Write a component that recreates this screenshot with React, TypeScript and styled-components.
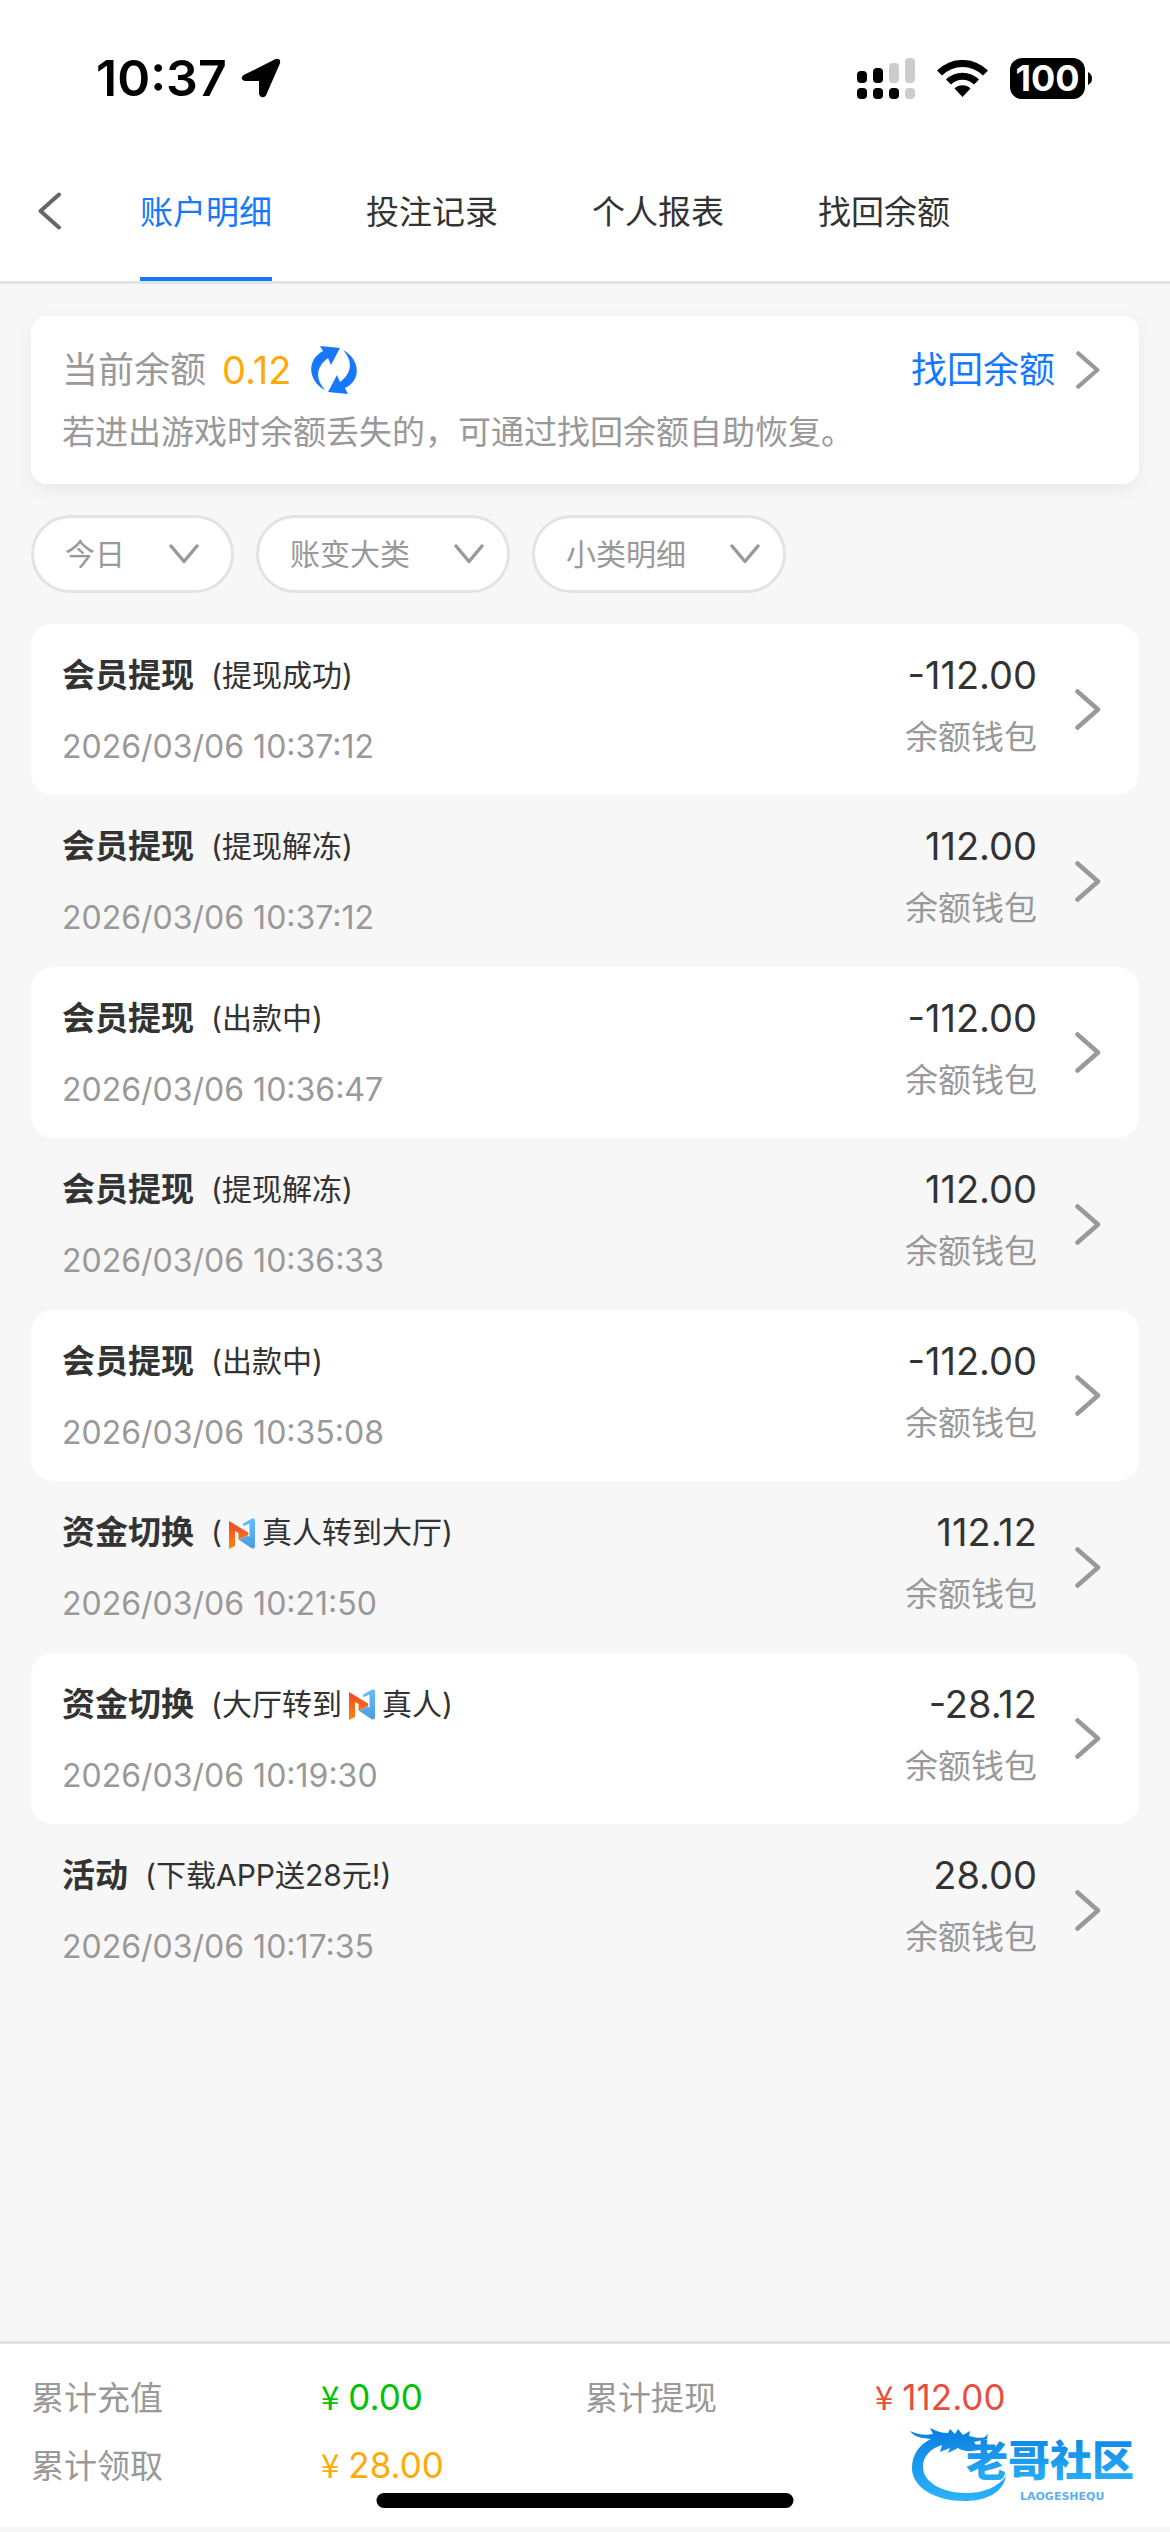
import React from "react";
import styled, { createGlobalStyle } from "styled-components";

const GlobalStyle = createGlobalStyle`
  *, *::before, *::after { box-sizing: border-box; }
  body {
    margin: 0;
    background: #f7f7f7;
    color: #333333;
    font-family: Inter, "Noto Sans CJK SC", sans-serif;
  }
  button, select { font: inherit; color: inherit; }
`;

const Page = styled.div`
  display: flex;
  flex-direction: column;
  min-height: 100vh;
`;

const StatusBar = styled.header`
  display: flex;
  align-items: center;
  justify-content: space-between;
  height: 156px;
  padding: 0 78px 0 96px;
  background: #ffffff;
  color: #000000;
`;

const StatusGroup = styled.div<{ $gap: number }>`
  display: flex;
  align-items: center;
  gap: ${(p) => p.$gap}px;
`;

const Clock = styled.time`
  font-size: 50px;
  font-weight: 600;
  line-height: 60px;
`;

const Battery = styled.div`
  display: flex;
  align-items: center;
  gap: 3px;
`;

const BatteryBody = styled.span`
  display: flex;
  align-items: center;
  justify-content: center;
  width: 75px;
  height: 41px;
  border-radius: 12px;
  background: #000000;
  color: #ffffff;
  font-size: 36px;
  font-weight: 700;
  line-height: 41px;
`;

const NavBar = styled.nav`
  display: flex;
  align-items: stretch;
  height: 128px;
  background: #ffffff;
  border-bottom: 3px solid #e3e3e3;
`;

const BackButton = styled.button`
  display: flex;
  align-items: center;
  width: 140px;
  padding: 0 0 16px 37px;
  border: 0;
  background: none;
  color: #666666;
`;

const Tabs = styled.div`
  display: flex;
  gap: 94px;
`;

const Tab = styled.button<{ $active?: boolean }>`
  padding: 6px 0 16px;
  border: 0;
  border-bottom: 4px solid ${(p) => (p.$active ? "#1677ff" : "transparent")};
  background: none;
  color: ${(p) => (p.$active ? "#1677ff" : "#333333")};
  font-size: 33px;
  line-height: 48px;
`;

const Content = styled.main`
  display: flex;
  flex: 1;
  flex-direction: column;
  padding: 32px 31px;
`;

const BalanceCard = styled.section`
  display: flex;
  flex-direction: column;
  gap: 12px;
  height: 168px;
  padding: 28px 38px 0 31px;
  border-radius: 16px;
  background: #ffffff;
  box-shadow: 0 6px 18px rgba(0, 0, 0, 0.06);
`;

const BalanceRow = styled.div`
  display: flex;
  align-items: center;
  height: 52px;
  color: #999999;
  font-size: 36px;
  line-height: 52px;
`;

const BalanceValue = styled.span`
  margin: 0 20px 0 16px;
  color: #ffaa09;
  font-size: 38px;
`;

const IconButton = styled.button`
  display: flex;
  padding: 0;
  border: 0;
  background: none;
  color: #1677ff;
`;

const RecoverLink = styled.a`
  display: flex;
  align-items: center;
  gap: 20px;
  margin-left: auto;
  color: #1677ff;
  text-decoration: none;
`;

const Hint = styled.p`
  margin: 0;
  color: #999999;
  font-size: 33px;
  line-height: 48px;
`;

const Filters = styled.div`
  display: flex;
  gap: 22px;
  margin: 31px 0;
`;

const FilterPill = styled.label`
  display: flex;
  align-items: center;
  gap: 44px;
  min-width: 203px;
  height: 78px;
  padding: 0 23px 0 31px;
  border: 3px solid #e3e3e3;
  border-radius: 39px;
  background: #ffffff;
  color: #999999;
`;

const FilterSelect = styled.select`
  appearance: none;
  padding: 0;
  border: 0;
  background: none;
  font-size: 30px;
  line-height: 44px;
`;

const RecordList = styled.ul`
  display: flex;
  flex-direction: column;
  margin: 0;
  padding: 0;
  list-style: none;
`;

const RecordItem = styled.li`
  display: flex;
  align-items: center;
  height: 171px;
  padding: 0 38px 0 31px;
  border-radius: 22px;

  &:nth-child(odd) { background: #ffffff; }
  &:nth-child(even) { height: 172px; }
`;

const RecordMain = styled.div`
  display: flex;
  flex: 1;
  flex-direction: column;
  gap: 26px;
`;

const RecordTitle = styled.div`
  display: flex;
  align-items: center;
  gap: 17px;
  font-size: 30px;
  line-height: 48px;
`;

const RecordKind = styled.strong`
  font-size: 33px;
  font-weight: 700;
`;

const RecordNote = styled.span`
  display: flex;
  align-items: center;
`;

const RecordTime = styled.time`
  color: #999999;
  font-size: 32px;
  line-height: 44px;
`;

const RecordSide = styled.div`
  display: flex;
  flex-direction: column;
  gap: 14px;
  margin-right: 38px;
  padding-bottom: 8px;
  text-align: right;
`;

const Amount = styled.span`
  font-size: 38px;
  line-height: 48px;
`;

const Wallet = styled.span`
  color: #999999;
  font-size: 33px;
  line-height: 48px;
`;

const BrandIcon = styled.svg`
  width: 26px;
  height: 31px;
  margin: 2px 7px 0;
`;

const Footer = styled.footer`
  position: sticky;
  bottom: 0;
  margin-bottom: 5px;
  padding: 30px 31px 37px;
  border-top: 3px solid #e3e3e3;
  background: #ffffff;
`;

const Totals = styled.dl`
  display: grid;
  grid-template-columns: 1fr 1fr;
  row-gap: 20px;
  margin: 0;
`;

const Total = styled.div`
  display: flex;
  font-size: 33px;
  line-height: 48px;
`;

const TotalLabel = styled.dt`
  width: 290px;
  color: #999999;
`;

const TotalValue = styled.dd<{ $color: string }>`
  display: flex;
  align-items: baseline;
  gap: 9px;
  height: 48px;
  margin: 0;
  color: ${(p) => p.$color};
  font-size: 35px;
  line-height: 44px;
`;

const Currency = styled.span`
  font-family: "Noto Sans CJK SC", sans-serif;
  font-size: 33px;
`;

const HomeIndicator = styled.div`
  position: absolute;
  bottom: 19px;
  left: 50%;
  width: 417px;
  height: 15px;
  border-radius: 8px;
  background: #000000;
  transform: translateX(-50%);
`;

const Watermark = styled.svg`
  position: absolute;
  right: 18px;
  bottom: 17px;
  width: 244px;
  height: 88px;
`;

const ChevronRight = ({ height = 41 }: { height?: number }) => (
  <svg width="26" height={height} viewBox="0 0 26 41" fill="none" stroke="#999999" strokeWidth="4.5" strokeLinecap="round" strokeLinejoin="round" aria-hidden="true">
    <path d="M2.5 2.5 23 20.5 2.5 38.5" />
  </svg>
);

const ChevronDown = () => (
  <svg width="30" height="20" viewBox="0 0 30 20" fill="none" stroke="#999999" strokeWidth="3.4" strokeLinecap="round" strokeLinejoin="round" aria-hidden="true">
    <path d="M2 2 15 17.5 28 2" />
  </svg>
);

const Brand = () => (
  <BrandIcon viewBox="0 0 26 31" aria-hidden="true">
    <defs>
      <linearGradient id="brandWarm" x1="0" y1="0" x2="0" y2="1">
        <stop offset="0" stopColor="#f0432f" />
        <stop offset="1" stopColor="#ff8a00" />
      </linearGradient>
      <linearGradient id="brandCool" x1="0" y1="0" x2="0" y2="1">
        <stop offset="0" stopColor="#62bdff" />
        <stop offset="1" stopColor="#4b9ddb" />
      </linearGradient>
    </defs>
    <path d="M13.5 6 23 .5Q26-.5 26 3V28Q26 31 23 30.500L9.500 21.500 19 17.500 20.500 19V5.500L15 8Z" fill="url(#brandCool)" />
    <path d="M0 3 19 14.500Q20 16 18.500 17.500L9.500 21.500V15L6 13V28L0 31Z" fill="url(#brandWarm)" />
  </BrandIcon>
);

const WatermarkLogo = () => (
  <Watermark viewBox="0 0 244 88" role="img" aria-label="老哥社区">
    <defs>
      <linearGradient id="waterBlue" x1="0" y1="0" x2="0" y2="1">
        <stop offset="0" stopColor="#0a7fe0" />
        <stop offset="1" stopColor="#2bb4fb" />
      </linearGradient>
    </defs>
    <path d="M23 17C10 23 4 34 4 46C4 66 28 79 56 79C78 79 95 71 98 54C90 65 76 71 58 71C34 71 15 60 15 45C15 34 22 27 34 23L32 30 42 26 40 31 50 26C56 30 63 30 76 27L77 23H68L66 20 79 17 80 12 77 15C71 17 66 15 61 14L62 9 55 13 50 7 47 12 42 7 40 11C34 11 28 9 22 6L25 12C17 14 9 12 2 9C7 16 15 16 23 17Z" fill="url(#waterBlue)" />
    <text x="58" y="54" fontSize="42" fontWeight="900" fontFamily="Noto Sans CJK SC, sans-serif" fill="url(#waterBlue)">老哥社区</text>
    <text x="112" y="78" fontSize="11" fontWeight="700" fontFamily="DejaVu Sans, sans-serif" fill="#5cb0f0">LAOGESHEQU</text>
  </Watermark>
);

type RecordEntry = { kind: string; note: React.ReactNode; time: string; amount: string };

const records: RecordEntry[] = [
  { kind: "会员提现", note: "(提现成功)", time: "2026/03/06 10:37:12", amount: "-112.00" },
  { kind: "会员提现", note: "(提现解冻)", time: "2026/03/06 10:37:12", amount: "112.00" },
  { kind: "会员提现", note: "(出款中)", time: "2026/03/06 10:36:47", amount: "-112.00" },
  { kind: "会员提现", note: "(提现解冻)", time: "2026/03/06 10:36:33", amount: "112.00" },
  { kind: "会员提现", note: "(出款中)", time: "2026/03/06 10:35:08", amount: "-112.00" },
  { kind: "资金切换", note: <>(<Brand />真人转到大厅)</>, time: "2026/03/06 10:21:50", amount: "112.12" },
  { kind: "资金切换", note: <>(大厅转到<Brand />真人)</>, time: "2026/03/06 10:19:30", amount: "-28.12" },
  { kind: "活动", note: "(下载APP送28元!)", time: "2026/03/06 10:17:35", amount: "28.00" },
];

const totals = [
  { label: "累计充值", value: "0.00", color: "#00c203" },
  { label: "累计提现", value: "112.00", color: "#ea4e3d" },
  { label: "累计领取", value: "28.00", color: "#ffaa09" },
];

const tabs = ["账户明细", "投注记录", "个人报表", "找回余额"];
const filters = ["今日", "账变大类", "小类明细"];

export default function App() {
  return (
    <Page>
      <GlobalStyle />
      <StatusBar>
        <StatusGroup $gap={14}>
          <Clock>10:37</Clock>
          <svg width="40" height="40" viewBox="0 0 40 40" aria-hidden="true">
            <path d="M3 18 35 2Q39 1 38 5L24 37Q21 40 19 36V22H4Q0 21 3 18Z" fill="#000" stroke="#000" strokeWidth="2" strokeLinejoin="round" />
          </svg>
        </StatusGroup>
        <StatusGroup $gap={22}>
          <svg width="58" height="41" viewBox="0 0 58 41" aria-label="信号" role="img">
            <rect x="0" y="13" width="10" height="12" rx="4" />
            <rect x="16" y="10" width="10" height="15" rx="4" />
            <rect x="32" y="5" width="10" height="20" rx="4" fill="#ccc" />
            <rect x="48" y="0" width="10" height="25" rx="4" fill="#ccc" />
            <rect x="0" y="30" width="10" height="11" rx="4" />
            <rect x="16" y="30" width="10" height="11" rx="4" />
            <rect x="32" y="30" width="10" height="11" rx="4" />
            <rect x="48" y="30" width="10" height="11" rx="4" fill="#ccc" />
          </svg>
          <svg width="51" height="37" viewBox="0 0 51 37" aria-label="Wi-Fi" role="img">
            <path d="M0 10.500A36 36 0 0 1 51 10.500L46 15.500A29 29 0 0 0 5 15.500Z" />
            <path d="M9 19.500A23.500 23.500 0 0 1 42 19.500L37 24.500A16.500 16.500 0 0 0 14 24.500Z" />
            <path d="M17.500 28.500A11.500 11.500 0 0 1 33.500 28.500L25.500 37Z" />
          </svg>
          <Battery>
            <BatteryBody>100</BatteryBody>
            <svg width="4" height="13" viewBox="0 0 4 13" aria-hidden="true">
              <path d="M0 0Q4 2 4 6.500Q4 11 0 13Z" />
            </svg>
          </Battery>
        </StatusGroup>
      </StatusBar>
      <NavBar>
        <BackButton aria-label="返回">
          <svg width="25" height="38" viewBox="0 0 25 38" fill="none" stroke="currentColor" strokeWidth="4" strokeLinecap="round" strokeLinejoin="round" aria-hidden="true">
            <path d="M22 2.500 3.500 19 22 35.500" />
          </svg>
        </BackButton>
        <Tabs>
          {tabs.map((tab, i) => (
            <Tab key={tab} $active={i === 0}>{tab}</Tab>
          ))}
        </Tabs>
      </NavBar>
      <Content>
        <BalanceCard>
          <BalanceRow>
            当前余额
            <BalanceValue>0.12</BalanceValue>
            <IconButton aria-label="刷新余额">
              <svg width="46" height="48" viewBox="0 0 46 48" fill="currentColor" aria-hidden="true">
                <path d="M9 0 29 2 20 19 17 12C6 20 3 32 14 44C-3 35-5 14 12 5Z" />
                <path d="M37 48 17 46 26 29 29 36C40 28 43 16 32 4C49 13 51 34 34 42Z" />
              </svg>
            </IconButton>
            <RecoverLink href="#recover">
              找回余额
              <ChevronRight height={38} />
            </RecoverLink>
          </BalanceRow>
          <Hint>若进出游戏时余额丢失的，可通过找回余额自助恢复。</Hint>
        </BalanceCard>
        <Filters>
          {filters.map((name) => (
            <FilterPill key={name}>
              <FilterSelect aria-label={name}>
                <option>{name}</option>
              </FilterSelect>
              <ChevronDown />
            </FilterPill>
          ))}
        </Filters>
        <RecordList>
          {records.map((r, i) => (
            <RecordItem key={i}>
              <RecordMain>
                <RecordTitle>
                  <RecordKind>{r.kind}</RecordKind>
                  <RecordNote>{r.note}</RecordNote>
                </RecordTitle>
                <RecordTime>{r.time}</RecordTime>
              </RecordMain>
              <RecordSide>
                <Amount>{r.amount}</Amount>
                <Wallet>余额钱包</Wallet>
              </RecordSide>
              <ChevronRight />
            </RecordItem>
          ))}
        </RecordList>
      </Content>
      <Footer>
        <Totals>
          {totals.map((t) => (
            <Total key={t.label}>
              <TotalLabel>{t.label}</TotalLabel>
              <TotalValue $color={t.color}>
                <Currency>¥</Currency>
                {t.value}
              </TotalValue>
            </Total>
          ))}
        </Totals>
        <HomeIndicator />
        <WatermarkLogo />
      </Footer>
    </Page>
  );
}
